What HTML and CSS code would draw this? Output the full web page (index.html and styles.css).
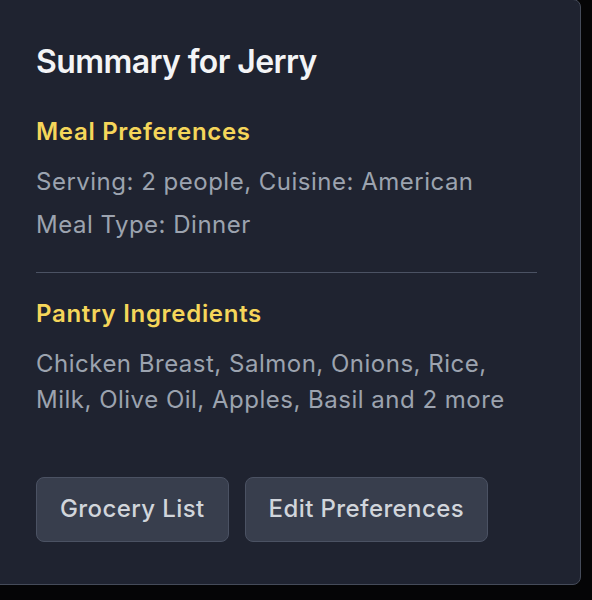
FILE: index.html
```html
<!DOCTYPE html>
<html lang="en">
<head>
<meta charset="utf-8">
<title>Summary for Jerry</title>
<link rel="stylesheet" href="styles.css">
</head>
<body>
<section class="card">
  <h1 class="title">Summary for Jerry</h1>
  <h2 class="label label-first">Meal Preferences</h2>
  <p class="info">Serving: 2 people, Cuisine: American</p>
  <p class="info info-next">Meal Type: Dinner</p>
  <hr class="divider">
  <h2 class="label">Pantry Ingredients</h2>
  <p class="info ingredients">Chicken Breast, Salmon, Onions, Rice, Milk, Olive Oil, Apples, Basil and 2 more</p>
  <div class="actions">
    <button class="btn btn-grocery">Grocery List</button>
    <button class="btn btn-edit">Edit Preferences</button>
  </div>
</section>
</body>
</html>
```
FILE: styles.css
```css
html, body {
  margin: 0;
  padding: 0;
  background: #050506;
}
body {
  font-family: Inter, "Noto Sans", "Liberation Sans", sans-serif;
  width: 592px;
  height: 600px;
  overflow: hidden;
}
.card {
  box-sizing: border-box;
  width: 589px;
  margin: -1px 0 0 -8px;
  padding: 42px 43px 42px 43px;
  background: #1f2330;
  border: 1px solid #454b59;
  border-radius: 8px;
}
.title {
  margin: 0;
  font-size: 32px;
  line-height: 40px;
  font-weight: 600;
  color: #f3f4f6;
  letter-spacing: -0.6px;
}
.label {
  margin: 0;
  font-size: 24px;
  line-height: 32px;
  font-weight: 600;
  color: #f5d65a;
  letter-spacing: 0.7px;
}
.label-first {
  margin-top: 34px;
}
.info {
  margin: 16px 0 0 0;
  font-size: 24px;
  line-height: 35px;
  color: #9ca3af;
  letter-spacing: 0.5px;
}
.info-next {
  margin-top: 8px;
}
.divider {
  margin: 30px 0 25px 0;
  border: 0;
  height: 1px;
  background: #4b5263;
}
.ingredients {
  margin-top: 16px;
  line-height: 35.5px;
}
.actions {
  display: flex;
  gap: 16px;
  margin-top: 60px;
}
.btn {
  box-sizing: border-box;
  height: 65px;
  padding: 0 23px 3px 23px;
  font-family: inherit;
  font-size: 24px;
  font-weight: 500;
  color: #d1d5db;
  background: #383e4d;
  border: 1px solid #4b5263;
  border-radius: 8px;
  letter-spacing: 0.4px;
}
```
